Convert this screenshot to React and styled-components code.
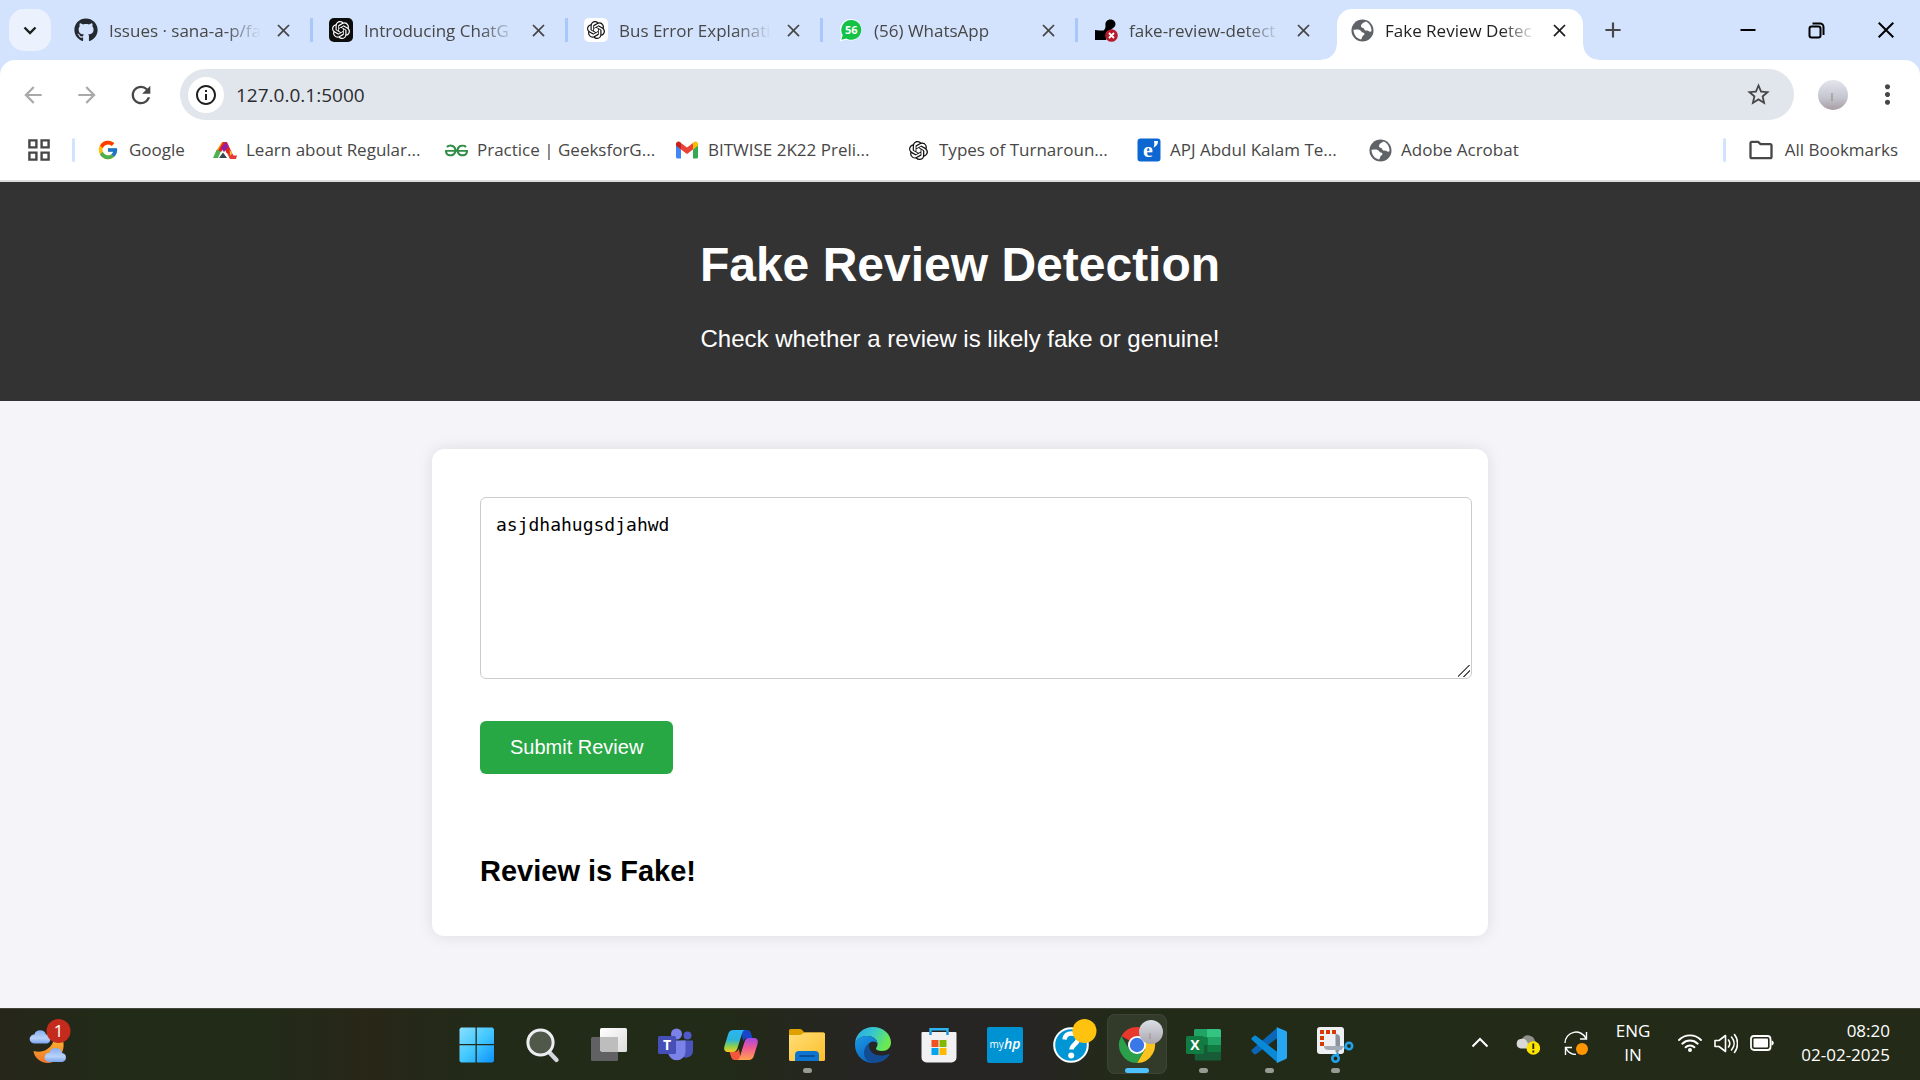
import React, { useState } from "react";
import styled, { createGlobalStyle, css } from "styled-components";
import { FaGithub } from "react-icons/fa";
import { FcGoogle } from "react-icons/fc";
import { SiOpenai, SiGeeksforgeeks } from "react-icons/si";
import { MdArrowBack, MdArrowForward, MdRefresh, MdOutlineInfo, MdStarBorder, MdMoreVert, MdClose, MdAdd, MdOutlineFolder } from "react-icons/md";

const uiFont = '"Open Sans", "Noto Sans", sans-serif';
const pageFont = '"Liberation Sans", Arial, sans-serif';

const GlobalStyle = createGlobalStyle`
  *, *::before, *::after { box-sizing: border-box; }
  body { margin: 0; font-family: ${uiFont}; }
  button { margin: 0; padding: 0; border: 0; background: none; font: inherit; color: inherit; cursor: pointer; }
  a { color: inherit; text-decoration: none; }
  svg { display: block; flex: none; }
`;

const Desktop = styled.div`
  display: flex;
  flex-direction: column;
  min-height: 100vh;
  background: #f4f4f9;
`;

/* ---------- browser chrome ---------- */

const BrowserTop = styled.header`
  background: #d3e3fd;
  color: #474747;
  font-size: 17px;
  line-height: 24px;
`;

const TabStrip = styled.div`
  display: flex;
  align-items: center;
  height: 60px;
  padding-left: 9px;
`;

const TabSearch = styled.button`
  display: flex;
  align-items: center;
  justify-content: center;
  width: 42px;
  height: 42px;
  margin-right: 7px;
  border-radius: 15px;
  background: #ebf2fe;
  color: #1f1f1f;
`;

const Tab = styled.div`
  display: flex;
  align-items: center;
  flex: 0 1 255px;
  min-width: 0;
  height: 24px;
  padding-left: 16px;
  border-right: 3px solid ${(p) => (p.$last ? "transparent" : "#a8c7fa")};
  ${(p) =>
    p.$active &&
    css`
      position: relative;
      align-self: flex-end;
      flex-basis: 246px;
      height: 51px;
      margin: 0 4px;
      padding: 0 0 9px 13px;
      border: 0;
      border-radius: 15px 15px 0 0;
      background: #fff;
      color: #1f1f1f;
      &::before,
      &::after {
        content: "";
        position: absolute;
        bottom: 0;
        width: 15px;
        height: 15px;
      }
      &::before {
        right: 100%;
        background: radial-gradient(circle at 0 0, transparent 14px, #fff 15px);
      }
      &::after {
        left: 100%;
        background: radial-gradient(circle at 100% 0, transparent 14px, #fff 15px);
      }
    `}
`;

const IconSlot = styled.span`
  display: flex;
  align-items: center;
  justify-content: center;
  flex: none;
  width: 24px;
  height: 24px;
`;

const TabLabel = styled.a`
  flex: 0 0 152px;
  margin: 0 10px 0 11px;
  padding-top: 2px;
  white-space: nowrap;
  mask-image: linear-gradient(to right, #000 calc(100% - 36px), transparent);
`;

const SmallButton = styled.button`
  display: flex;
  align-items: center;
  justify-content: center;
  flex: none;
  width: 24px;
  height: 24px;
`;

const NewTab = styled(SmallButton)`
  width: 36px;
  height: 36px;
  margin-left: 8px;
`;

const WindowControls = styled.div`
  display: flex;
  margin-left: auto;
`;

const WindowButton = styled.button`
  display: flex;
  align-items: center;
  justify-content: center;
  width: 69px;
  height: 58px;
`;

const Toolbar = styled.div`
  display: flex;
  align-items: center;
  gap: 12px;
  padding: 9px 12px 0;
  border-radius: 15px 15px 0 0;
  background: #fff;
`;

const NavButton = styled.button`
  display: flex;
  align-items: center;
  justify-content: center;
  flex: none;
  width: 42px;
  height: 42px;
  color: ${(p) => (p.disabled ? "#a9a9a9" : "#474747")};
`;

const Omnibox = styled.div`
  display: flex;
  align-items: center;
  flex: 1;
  height: 51px;
  margin: 0 12px 0 6px;
  padding: 0 15px 0 8px;
  border-radius: 26px;
  background: #e1e5ec;
`;

const SiteInfo = styled.button`
  display: flex;
  align-items: center;
  justify-content: center;
  width: 36px;
  height: 36px;
  border-radius: 50%;
  background: #fff;
  color: #1f1f1f;
`;

const Address = styled.input`
  flex: 1;
  min-width: 0;
  padding: 0 12px;
  border: 0;
  outline: 0;
  background: none;
  color: #2b2c2e;
  font: 19px/28px ${uiFont};
`;

const Profile = styled.button`
  display: flex;
  align-items: center;
  justify-content: center;
  width: 30px;
  height: 30px;
  margin-right: 6px;
  border-radius: 50%;
  background: linear-gradient(#e4e6ee, #c3c5cf 60%, #a99ca4);
`;

const BookmarkBar = styled.nav`
  display: flex;
  align-items: center;
  height: 62px;
  padding: 0 22px 0 27px;
  border-bottom: 2px solid #dedede;
  background: #fff;
`;

const Divider = styled.span`
  width: 3px;
  height: 24px;
  margin: 0 21px;
  border-radius: 2px;
  background: #d3e3fd;
`;

const Bookmark = styled.a`
  display: flex;
  align-items: center;
  gap: 9px;
  margin-right: 24px;
  white-space: nowrap;
`;

const BookmarkLabel = styled.span`
  width: ${(p) => (p.$long ? "174px" : "auto")};
  min-width: 60px;
`;

const AllBookmarks = styled.button`
  display: flex;
  align-items: center;
  gap: 10px;
`;

const PushRight = styled.div`
  display: flex;
  align-items: center;
  margin-left: auto;
`;

/* ---------- web page ---------- */

const Page = styled.main`
  flex: 1;
  background: #f4f4f9;
  font-family: ${pageFont};
`;

const Hero = styled.div`
  display: flex;
  flex-direction: column;
  padding: 24px;
  background: #333;
  color: #fff;
  text-align: center;
`;

const Title = styled.h1`
  margin: 32px 0;
  font-size: 48px;
  line-height: 54px;
`;

const Tagline = styled.p`
  margin: 0 0 24px;
  font-size: 24px;
  line-height: 29px;
`;

const Card = styled.section`
  width: 55%;
  margin: 48px auto;
  padding: 48px;
  border-radius: 12px;
  background: #fff;
  box-shadow: 0 0 15px rgba(0, 0, 0, 0.1);
`;

const ReviewForm = styled.form`
  display: flex;
  flex-direction: column;
  align-items: flex-start;
  gap: 42px;
`;

const ReviewBox = styled.textarea`
  box-sizing: content-box;
  width: 100%;
  height: 150px;
  padding: 15px;
  border: 1px solid #ccc;
  border-radius: 6px;
  outline: 0;
  background: #fff;
  color: #000;
  font: 18px/24px "DejaVu Sans Mono", monospace;
  &::-webkit-resizer {
    background: linear-gradient(135deg, transparent 45%, #555 46% 52%, transparent 53% 68%, #555 69% 75%, transparent 76%) 2px 2px / 12px 12px no-repeat;
  }
`;

const Submit = styled.button`
  padding: 15px 30px;
  border-radius: 6px;
  background: #28a745;
  color: #fff;
  font: 20px/23px ${pageFont};
`;

const Result = styled.h2`
  margin: 80px 0 0;
  color: #000;
  font-size: 29px;
  line-height: 34px;
`;

/* ---------- taskbar ---------- */

const Taskbar = styled.footer`
  display: grid;
  grid-template-columns: 447px auto 1fr;
  align-items: center;
  height: 72px;
  padding-bottom: 1px;
  border-top: 1px solid #43453d;
  background: linear-gradient(to right, #26261a, #222a18 5%, #222a18 14%, #282718 19%, #222a18 25%, #222a18 38%, #272523 45%, #272523 54%, #222a18 58%, #232b18);
  color: #fff;
  font-size: 17px;
  line-height: 24px;
`;

const Widgets = styled.button`
  justify-self: start;
  margin-left: 28px;
  padding-bottom: 2px;
`;

const AppRow = styled.div`
  display: flex;
  gap: 6px;
`;

const AppButton = styled.button`
  display: flex;
  flex-direction: column;
  align-items: center;
  justify-content: flex-end;
  gap: 5px;
  width: 60px;
  height: 60px;
  padding-bottom: 1px;
  border-radius: 8px;
  ${(p) => p.$active && "background: #323a2a; box-shadow: inset 0 0 0 1px #3d4435;"}
`;

const Indicator = styled.span`
  width: ${(p) => (p.$state === "active" ? 24 : 9)}px;
  height: 5px;
  border-radius: 3px;
  background: ${(p) => (p.$state === "active" ? "#4cc2ff" : p.$state === "open" ? "#989b94" : "transparent")};
`;

const Tray = styled.div`
  display: flex;
  align-items: center;
  justify-content: flex-end;
  gap: 24px;
  padding: 0 30px 2px 0;
`;

const Status = styled.button`
  display: flex;
  gap: 12px;
`;

const Language = styled.button`
  width: 42px;
  text-align: center;
`;

const Clock = styled.button`
  min-width: 92px;
  text-align: right;
`;

/* ---------- drawings ---------- */

const Globe = () => (
  <svg width="23" height="23" viewBox="0 0 24 24" fill="none">
    <circle cx="12" cy="12" r="11.5" fill="#5f6368" />
    <path d="M15.5 2.6C12.5 4 10.2 5.4 10.4 7.6c.2 1.9 2.6 1.3 3.2 2.7.5 1.3 1 2 2.8 1.8 1.6-.2 2 1.2 3.6 1.2l1.4-.6c.2-4.600-2.200-8.300-5.900-10.100z" fill="#fff" />
    <path d="M2.600 11.200c2.600.2 4.200-.6 6.400.2 2.200.9 1.500 2.300 3.500 2.700 2.100.4 1.900 2.300.4 3.200-1.700 1-1 2.400-2.300 4.100-4.600-.9-7.900-4.900-8-10.200z" fill="#fff" />
  </svg>
);

const OpenAiTile = ({ dark }) => (
  <svg width="24" height="24" viewBox="0 0 24 24">
    <rect width="24" height="24" rx="5" fill={dark ? "#0d0d0d" : "#fff"} />
    <SiOpenai x="3" y="3" size={18} color={dark ? "#fff" : "#111"} />
  </svg>
);

const WhatsApp = () => (
  <svg width="24" height="24" viewBox="0 0 24 24">
    <path d="M12.300 1A10.800 10.800 0 1 1 7.200 21.600L.8 23.400 2.500 17A10.800 10.800 0 0 1 12.300 1z" fill="#fff" />
    <path d="M12.300 2A9.900 9.900 0 1 1 7.300 20.400L2.400 21.800 3.700 17A9.900 9.900 0 0 1 12.300 2z" fill="#14c246" />
    <text x="12.300" y="16" textAnchor="middle" fontSize="11" fontWeight="700" fontFamily="Open Sans, sans-serif" fill="#fff">56</text>
  </svg>
);

const Notebook = () => (
  <svg width="24" height="24" viewBox="0 0 24 24">
    <path d="M1 12c2.500.7 4.600.3 8.500.5 1.600-1.400 2-2.500 2-5C11 4 13 1.500 16.600 1.500c3.200 0 5.400 2.500 4.800 5.500-.6 2.600-3.600 3.600-5.600 5.800-1.400 2-1.800 5-3.800 9.200H1z" fill="#000" />
    <circle cx="17.500" cy="17.500" r="6.300" fill="#b81c2c" />
    <path d="M15 15l5 5M20 15l-5 5" stroke="#fff" strokeWidth="1.800" />
  </svg>
);

const Mountain = () => (
  <svg width="24" height="22" viewBox="0 0 24 22">
    <path d="M9 3h4l-7 9H3z" fill="#f7a11a" />
    <path d="M3.500 11h5L5 19H0z" fill="#4cb050" />
    <path d="M10 3h4l5 11h-5.500L11 8.500 8 13 5.500 11z" fill="#e0251b" />
    <path d="M13 3l2.500 4.500L11 13 8 9z" fill="#8f1fa8" />
    <path d="M6 19l4-5.500L14 19z" fill="#37474f" />
    <path d="M14 14h5l1.500 2.500H24l-1 3.500h-6z" fill="#e53935" />
    <path d="M16.500 11l2.500 3-1.500 3z" fill="#fdd835" />
  </svg>
);

const Gmail = () => (
  <svg width="22" height="18" viewBox="0 0 22 17">
    <path d="M0 2.500V15.500A1.500 1.500 0 0 0 1.500 17H5V8z" fill="#4285f4" />
    <path d="M22 2.500V15.500A1.500 1.500 0 0 1 20.500 17H17V8z" fill="#34a853" />
    <path d="M17 1.500V8l5-3.700V2.500C22 .3 19.500-.8 17.800.6z" fill="#fbbc04" />
    <path d="M5 8V1.500l6 4.600 6-4.600V8l-6 4.600z" fill="#ea4335" />
    <path d="M0 2.500v1.800L5 8V1.500L4.200.6C2.500-.8 0 .3 0 2.500z" fill="#c5221f" />
  </svg>
);

const ETile = () => (
  <svg width="24" height="24" viewBox="0 0 24 24">
    <rect x=".5" y=".5" width="23" height="23" rx="3" fill="#0d67d2" />
    <text x="11" y="19" textAnchor="middle" fontSize="22" fontWeight="700" fontFamily="Liberation Serif, serif" fill="#fff">e</text>
    <path d="M17 3h4c0 3-1 5-4.500 6.500 1-2 1-4 .5-6.500z" fill="#fff" />
  </svg>
);

const AppsGrid = () => (
  <svg width="24" height="24" viewBox="0 0 24 24" fill="none" stroke="#474747" strokeWidth="2.400">
    <path d="M2.400 2.400h7v7h-7zM14.600 2.400h7v7h-7zM2.400 14.600h7v7h-7zM14.600 14.600h7v7h-7z" />
  </svg>
);

const ChevronDown = () => (
  <svg width="14" height="14" viewBox="0 0 14 14" fill="none" stroke="#1f1f1f" strokeWidth="2.400"><path d="M1.500 4.500L7 10l5.500-5.500" /></svg>
);
const MinimizeIcon = () => (
  <svg width="16" height="16" viewBox="0 0 16 16" stroke="#000" strokeWidth="2"><path d="M.5 8h15" /></svg>
);
const RestoreIcon = () => (
  <svg width="17" height="17" viewBox="0 0 17 17" fill="none" stroke="#000" strokeWidth="2">
    <rect x="1.500" y="4.500" width="11" height="11" rx="2" />
    <path d="M4.500 1.500H12a3.500 3.500 0 0 1 3.500 3.500v8" />
  </svg>
);
const CloseIcon = () => (
  <svg width="16" height="16" viewBox="0 0 16 16" stroke="#000" strokeWidth="2"><path d="M.7.7l14.600 14.600M15.300.7L.7 15.300" /></svg>
);

const Weather = () => (
  <svg width="44" height="54" viewBox="0 0 44 54">
    <defs>
      <linearGradient id="moon" x1="0" y1="0" x2="0" y2="1"><stop stopColor="#fbb731" /><stop offset="1" stopColor="#f0752a" /></linearGradient>
      <linearGradient id="cloud" x1="0" y1="0" x2="0" y2="1"><stop stopColor="#86aef0" /><stop offset=".6" stopColor="#b7d3fb" /><stop offset="1" stopColor="#7ca4ea" /></linearGradient>
    </defs>
    <path d="M5.500 35c8 2.500 17-1 20.500-11l8-2c5 10-2 25-14 25-8 0-14-6-14.500-12z" fill="url(#moon)" />
    <path d="M6 27.500a4.500 4.500 0 0 1 .3-9 6.200 6.200 0 0 1 11.700 0 4.600 4.600 0 0 1 1 9z" fill="url(#cloud)" />
    <path d="M21 46a4.600 4.600 0 0 1 .4-9.200 6.500 6.500 0 0 1 12.600.2 4.600 4.600 0 0 1 .5 9z" fill="url(#cloud)" />
    <circle cx="30.500" cy="15" r="12" fill="#c42b1c" />
    <text x="30.500" y="21" textAnchor="middle" fontSize="17" fontFamily="Open Sans, sans-serif" fill="#fff">1</text>
  </svg>
);

const Art = ({ children }) => (
  <svg width="36" height="36" viewBox="0 0 36 36" overflow="visible">{children}</svg>
);

const StartArt = () => (
  <Art>
    <defs><linearGradient id="win" gradientUnits="userSpaceOnUse" x1="0" y1="0" x2="36" y2="36"><stop stopColor="#8be0ff" /><stop offset=".5" stopColor="#43c8ff" /><stop offset="1" stopColor="#0a90fb" /></linearGradient></defs>
    <path d="M2 .5h14.500V17H.5V2zM17.800.5H33.500l1.500 1.500v15H17.800zM.5 18.300h16V35.500H2L.5 34zM17.800 18.300H35V34l-1.500 1.500H17.800z" fill="url(#win)" />
  </Art>
);
const SearchArt = () => (
  <Art>
    <path d="M24.500 25.500l7 7.500" stroke="#d5d7dd" strokeWidth="4.400" strokeLinecap="round" />
    <circle cx="15.500" cy="15.500" r="12.600" fill="#50584a" stroke="#eceef2" strokeWidth="3" />
  </Art>
);
const TaskViewArt = () => (
  <Art>
    <defs><linearGradient id="tv" x1="0" y1="0" x2="1" y2="1"><stop stopColor="#fff" /><stop offset="1" stopColor="#dcdcdc" /></linearGradient></defs>
    <rect x="9" y="1" width="27" height="24" rx="1.500" fill="url(#tv)" />
    <rect x="0" y="10" width="27" height="24" rx="1.500" fill="#616163" />
    <path d="M9 10h18v15H10.500L9 23.500z" fill="#bdbdbd" />
  </Art>
);
const TeamsArt = () => (
  <Art>
    <circle cx="30.500" cy="8.500" r="4" fill="#5059c9" />
    <path d="M24 13.500h12v10a7 7 0 0 1-12 5z" fill="#4b53bc" />
    <circle cx="19.500" cy="7" r="5.500" fill="#7b83eb" />
    <path d="M11 13.500h17.500v11a8.700 8.700 0 0 1-17.500 0z" fill="#7b83eb" />
    <rect x="1" y="9" width="18" height="18" rx="1.500" fill="#464eb8" />
    <text x="10" y="23" textAnchor="middle" fontSize="14" fontWeight="700" fontFamily="Open Sans, sans-serif" fill="#fff">T</text>
  </Art>
);
const CopilotArt = () => (
  <Art>
    <defs>
      <linearGradient id="cp1" x1="0" y1="0" x2="0" y2="1"><stop stopColor="#2cb5f5" /><stop offset=".45" stopColor="#2cb5d8" /><stop offset=".75" stopColor="#8fd04a" /><stop offset="1" stopColor="#f9cb23" /></linearGradient>
      <linearGradient id="cp2" x1="0" y1="0" x2="0" y2="1"><stop stopColor="#a348e8" /><stop offset=".45" stopColor="#ee5a94" /><stop offset="1" stopColor="#ffa24c" /></linearGradient>
    </defs>
    <path d="M18 3h6c2.600 0 3.500 1.500 4.200 4l1.300 4h-5c-2.500 0-3.600 1.300-4.300 3.500z" fill="#1746c8" />
    <path d="M18 33h-6c-2.600 0-3.500-1.500-4.200-4L6.500 25h5c2.500 0 3.600-1.300 4.300-3.500z" fill="#f4573b" />
    <path d="M10.500 3h12c-2.400 0-3 2-3.700 4.300L14.500 21c-.9 2.700-2 4-4.500 4H5.200c-3.700 0-4.700-2.500-3.700-6L5.200 7C6 4.400 7.700 3 10.500 3z" fill="url(#cp1)" />
    <path d="M25.500 33h-12c2.400 0 3-2 3.700-4.300L21.500 15c.9-2.700 2-4 4.500-4h4.800c3.700 0 4.700 2.500 3.700 6l-3.700 12c-.8 2.600-2.500 4-5.300 4z" fill="url(#cp2)" />
  </Art>
);
const FilesArt = () => (
  <Art>
    <defs><linearGradient id="fl" x1="0" y1="0" x2="1" y2="1"><stop stopColor="#ffde7a" /><stop offset="1" stopColor="#fdbf28" /></linearGradient></defs>
    <path d="M0 3.500A1.500 1.500 0 0 1 1.500 2H11c1.500 0 2 .8 3 2l1.500 1.500H34A2 2 0 0 1 36 7v8H0z" fill="#dfa100" />
    <path d="M0 8h11c2 0 3-2.500 5-2.500h18.500A1.500 1.500 0 0 1 36 7v25.500a1.500 1.500 0 0 1-1.500 1.500h-33A1.500 1.500 0 0 1 0 32.500z" fill="url(#fl)" />
    <path d="M6 34v-6a4 4 0 0 1 4-4h16a4 4 0 0 1 4 4v6z" fill="#0f74cf" />
    <path d="M11 29h14" stroke="#0a4f9a" strokeWidth="2" strokeLinecap="round" />
  </Art>
);
const EdgeArt = () => (
  <Art>
    <defs>
      <linearGradient id="eg1" x1="0" y1="0" x2="1" y2=".4"><stop stopColor="#2aa6e6" /><stop offset=".5" stopColor="#35c6d0" /><stop offset="1" stopColor="#6bea50" /></linearGradient>
      <linearGradient id="eg2" x1="0" y1="0" x2=".6" y2="1"><stop stopColor="#1c9be8" /><stop offset="1" stopColor="#0a62bb" /></linearGradient>
    </defs>
    <path d="M0 16C1 6.500 8.500 0 18 0c10.500 0 18 7.500 18 15.500 0 5-3.800 8.500-9 8.500-4 0-6-1.200-6-2.500 0-1 1.500-1.700 1.500-4.500 0-4.500-4.500-8-10.500-8C7 9 2.500 11.500 0 16z" fill="url(#eg1)" />
    <path d="M12 9c6 0 10.500 3.500 10.500 8-1-2-2.500-2.600-4.500-2.600-3 0-5.500 3.100-5.500 7.100 0 6 5 10.500 12 10.500-.8 2.500-3.500 4-6.500 4C8 36 0 28 0 18v-2c2.500-4.500 7-7 12-7z" fill="url(#eg2)" />
    <path d="M14.500 16c-2 6 2.500 12.500 11.500 12.500 3.200 0 5.500-.7 7.500-1.500.8-.3 1.400.3.900 1C31.200 33 25 36 19 36c-6 0-10-5-10-10 0-4.500 2.500-8 5.500-10z" fill="#134c92" />
  </Art>
);
const StoreArt = () => (
  <Art>
    <path d="M9.500 8V2.300h17V8" fill="none" stroke="#2bb4f2" strokeWidth="2.400" />
    <path d="M.5 6A1 1 0 0 1 1.500 5h33a1 1 0 0 1 1 1v24.500a5 5 0 0 1-5 5h-25a5 5 0 0 1-5-5z" fill="#f1f1f3" />
    <path d="M9.500 5v3M26.500 5v3" stroke="#1590dc" strokeWidth="2.400" />
    <path d="M10.500 13h7v7h-7z" fill="#f25022" /><path d="M18.500 13h7v7h-7z" fill="#7fba00" />
    <path d="M10.500 21h7v7h-7z" fill="#00a4ef" /><path d="M18.500 21h7v7h-7z" fill="#ffb900" />
  </Art>
);
const MyHpArt = () => (
  <Art>
    <rect width="36" height="36" rx="2" fill="#0093d3" />
    <text x="2.500" y="21" fontSize="10" fontFamily="Open Sans, sans-serif" fill="#fff">my</text>
    <text x="17" y="22" fontSize="14" fontStyle="italic" fontWeight="600" fontFamily="Open Sans, sans-serif" fill="#fff">hp</text>
  </Art>
);
const HelpArt = () => (
  <Art>
    <circle cx="18" cy="18" r="16.800" fill="#0096d6" stroke="#fff" strokeWidth="2" />
    <path d="M11.500 12.500c.5-4 3-6 6.800-6 4 0 6.700 2.300 6.700 5.600 0 5-6.500 5.400-6.500 10.400" fill="none" stroke="#fff" strokeWidth="4.400" />
    <circle cx="18.200" cy="28.500" r="3" fill="#fff" />
    <circle cx="31.500" cy="4" r="12" fill="#ffc20e" />
  </Art>
);
const ChromeArt = () => (
  <Art>
    <defs><linearGradient id="pf" x1="0" y1="0" x2="0" y2="1"><stop stopColor="#dcdfe8" /><stop offset="1" stopColor="#aaa6ae" /></linearGradient></defs>
    <path d="M18 18L2.400 9A18 18 0 0 1 33.600 9H18z" fill="#e8392d" />
    <path d="M18 9H33.600A18 18 0 0 1 18 36l7.800-13.500z" fill="#fcc31e" />
    <path d="M25.800 22.500L18 36A18 18 0 0 1 2.400 9l7.800 13.500z" fill="#2aa04a" />
    <circle cx="18" cy="18" r="9" fill="#fff" />
    <circle cx="18" cy="18" r="7.200" fill="#3b78e7" />
    <circle cx="32" cy="5" r="12" fill="url(#pf)" />
    <path d="M31 6v6" stroke="#9c9387" />
  </Art>
);
const ExcelArt = () => (
  <Art>
    <path d="M10 2h12v9H9V3z" fill="#21a366" /><path d="M22 2h12.500L36 3v8H22z" fill="#33c481" />
    <path d="M9 10h13.500v8H9z" fill="#107c41" /><path d="M22.500 10H36v8H22.500z" fill="#21a366" />
    <path d="M9 18h27v15.500H10z" fill="#185c37" /><path d="M22.500 18H36v7H22.500z" fill="#107c41" />
    <rect x="1" y="9" width="18" height="18" rx="1.500" fill="#107c41" />
    <text x="10" y="23" textAnchor="middle" fontSize="14" fontWeight="700" fontFamily="Open Sans, sans-serif" fill="#fff">X</text>
  </Art>
);
const CodeArt = () => (
  <Art>
    <path d="M26.500.5L1 22.500c-.8.800-.8 1.800 0 2.600l2 1.900c.7.600 1.500.600 2.300 0L27 10.500z" fill="#0b66b5" />
    <path d="M1 10.500c-.8.800-.8 1.800 0 2.600l25.500 22.400L27 25.500 5.300 9c-.8-.6-1.600-.6-2.300 0z" fill="#0a8ad6" />
    <path d="M26.500.500L35 4a2 2 0 0 1 1 1.800v24.400a2 2 0 0 1-1 1.800l-8.500 3.700c-1 .3-1.500 0-.500-1.500V2c-1-1.500-.500-1.800.500-1.500z" fill="#27a7f2" />
  </Art>
);
const SnipArt = () => (
  <Art>
    <rect width="27" height="27" rx="3" fill="#eef0f3" />
    <path d="M3 3h4v4H3zM9 3h4v4H9zM15 3h4v4h-4zM3 9h4v4H3zM3 15h4v4H3z" fill="#d83b01" />
    <path d="M18.500 7c2.500 0 4.500 1 4.500 4v11l-2.500 5-2-2.500z" fill="#8a939e" />
    <path d="M7 19h20l-2.500 4H12c-3 0-5-1-5-4z" fill="#a3abb5" />
    <circle cx="32" cy="19" r="3.200" fill="none" stroke="#22a2ea" strokeWidth="2.600" />
    <circle cx="18.500" cy="31.500" r="3.200" fill="none" stroke="#22a2ea" strokeWidth="2.600" />
    <path d="M27 21l3-1M20 29l1-3" stroke="#22a2ea" strokeWidth="2.600" />
  </Art>
);

const ProfileMark = () => (
  <svg width="4" height="14" viewBox="0 0 4 14" stroke="#8f877c"><path d="M1 5v8" /></svg>
);
const ChevronUp = () => (
  <svg width="24" height="24" viewBox="0 0 24 24" fill="none" stroke="#fff" strokeWidth="2"><path d="M4.500 15.500L12 8l7.500 7.500" /></svg>
);
const CloudAlert = () => (
  <svg width="24" height="24" viewBox="0 0 24 24">
    <path d="M6 8a7 7 0 0 1 13 2c2 .500 2 6 0 6H10z" fill="#8f9189" />
    <path d="M4.500 17.500a4.800 4.800 0 0 1 0-9.400c3-1 6 .4 7 3.400l2 6z" fill="#d9d9d9" />
    <circle cx="17.300" cy="17" r="6.800" fill="#fde300" />
    <path d="M17.300 12.500v5.500M17.300 19.500v2" stroke="#222" strokeWidth="1.800" />
  </svg>
);
const SyncIcon = () => (
  <svg width="24" height="24" viewBox="0 0 24 24" fill="none" stroke="#fff" strokeWidth="1.400">
    <path d="M1 12A11 11 0 0 1 22 7.500M22.500 1v7H16M12 23.500C8 23.500 4 21 2 17.300M1.500 24v-7.500H8" />
    <circle cx="18" cy="18" r="6" fill="#ff9500" stroke="none" />
  </svg>
);
const WifiIcon = () => (
  <svg width="24" height="24" viewBox="0 0 24 24" fill="none" stroke="#fff" strokeWidth="1.900" strokeLinecap="round">
    <path d="M1 9a15.500 15.500 0 0 1 22 0M4.300 12.700a11 11 0 0 1 15.400 0M7.600 16.300a6.300 6.300 0 0 1 8.800 0" />
    <circle cx="12" cy="19" r="2" fill="#fff" stroke="none" />
  </svg>
);
const VolumeIcon = () => (
  <svg width="24" height="24" viewBox="0 0 24 24" fill="none" stroke="#fff" strokeWidth="1.600" strokeLinecap="round" strokeLinejoin="round">
    <path d="M1 9.500v6h4l6.500 5v-16l-6.500 5zM14.500 9c1.500 2 1.500 5 0 7M17.500 6c3.500 4 3.500 9 0 13M20.500 3.500c4 5 4 13 0 18" />
  </svg>
);
const BatteryIcon = () => (
  <svg width="24" height="24" viewBox="0 0 24 24" fill="none">
    <rect x="1" y="5" width="19.500" height="14" rx="3" stroke="#fff" strokeWidth="1.800" />
    <rect x="3.500" y="7.500" width="14.500" height="9" rx="1" fill="#fff" />
    <path d="M21.500 9.500c3 .5 3 4.500 0 5z" fill="#fff" />
  </svg>
);

/* ---------- data ---------- */

const tabs = [
  { title: "Issues · sana-a-p/fa", icon: <FaGithub size={24} color="#24292f" /> },
  { title: "Introducing ChatG", icon: <OpenAiTile dark /> },
  { title: "Bus Error Explanati", icon: <OpenAiTile /> },
  { title: "(56) WhatsApp", icon: <WhatsApp /> },
  { title: "fake-review-detect", icon: <Notebook />, last: true },
  { title: "Fake Review Detec", icon: <Globe />, active: true },
];

const bookmarks = [
  { label: "Google", icon: <FcGoogle size={22} /> },
  { label: "Learn about Regular...", icon: <Mountain />, long: true },
  { label: "Practice | GeeksforG...", icon: <SiGeeksforgeeks size={23} color="#2f8d46" />, long: true },
  { label: "BITWISE 2K22 Preli...", icon: <Gmail />, long: true },
  { label: "Types of Turnaroun...", icon: <SiOpenai size={19} color="#111" />, long: true },
  { label: "APJ Abdul Kalam Te...", icon: <ETile />, long: true },
  { label: "Adobe Acrobat", icon: <Globe /> },
];

const apps = [
  { name: "Start", art: <StartArt /> },
  { name: "Search", art: <SearchArt /> },
  { name: "Task View", art: <TaskViewArt /> },
  { name: "Microsoft Teams", art: <TeamsArt /> },
  { name: "Copilot", art: <CopilotArt /> },
  { name: "File Explorer", art: <FilesArt />, state: "open" },
  { name: "Microsoft Edge", art: <EdgeArt /> },
  { name: "Microsoft Store", art: <StoreArt /> },
  { name: "myHP", art: <MyHpArt /> },
  { name: "HP Support Assistant", art: <HelpArt /> },
  { name: "Google Chrome", art: <ChromeArt />, state: "active" },
  { name: "Excel", art: <ExcelArt />, state: "open" },
  { name: "Visual Studio Code", art: <CodeArt />, state: "open" },
  { name: "Snipping Tool", art: <SnipArt />, state: "open" },
];

export default function App() {
  const [url, setUrl] = useState("127.0.0.1:5000");
  const [review, setReview] = useState("asjdhahugsdjahwd");

  return (
    <Desktop>
      <GlobalStyle />
      <BrowserTop>
        <TabStrip>
          <TabSearch aria-label="Search tabs"><ChevronDown /></TabSearch>
          {tabs.map((tab) => (
            <Tab key={tab.title} $active={tab.active} $last={tab.last}>
              <IconSlot>{tab.icon}</IconSlot>
              <TabLabel href="#">{tab.title}</TabLabel>
              <SmallButton aria-label="Close tab"><MdClose size={21} /></SmallButton>
            </Tab>
          ))}
          <NewTab aria-label="New tab"><MdAdd size={26} /></NewTab>
          <WindowControls>
            <WindowButton aria-label="Minimize"><MinimizeIcon /></WindowButton>
            <WindowButton aria-label="Restore"><RestoreIcon /></WindowButton>
            <WindowButton aria-label="Close"><CloseIcon /></WindowButton>
          </WindowControls>
        </TabStrip>

        <Toolbar>
          <NavButton aria-label="Back" disabled><MdArrowBack size={26} /></NavButton>
          <NavButton aria-label="Forward" disabled><MdArrowForward size={26} /></NavButton>
          <NavButton aria-label="Reload"><MdRefresh size={28} /></NavButton>
          <Omnibox>
            <SiteInfo aria-label="Site information"><MdOutlineInfo size={24} /></SiteInfo>
            <Address aria-label="Address" value={url} onChange={(e) => setUrl(e.target.value)} />
            <NavButton aria-label="Bookmark this page"><MdStarBorder size={27} /></NavButton>
          </Omnibox>
          <Profile aria-label="Profile"><ProfileMark /></Profile>
          <NavButton aria-label="Menu"><MdMoreVert size={31} /></NavButton>
        </Toolbar>

        <BookmarkBar>
          <SmallButton aria-label="Apps"><AppsGrid /></SmallButton>
          <Divider />
          {bookmarks.map((b) => (
            <Bookmark key={b.label} href="#">
              <IconSlot>{b.icon}</IconSlot>
              <BookmarkLabel $long={b.long}>{b.label}</BookmarkLabel>
            </Bookmark>
          ))}
          <PushRight>
            <Divider />
            <AllBookmarks><MdOutlineFolder size={28} />All Bookmarks</AllBookmarks>
          </PushRight>
        </BookmarkBar>
      </BrowserTop>

      <Page>
        <Hero>
          <Title>Fake Review Detection</Title>
          <Tagline>Check whether a review is likely fake or genuine!</Tagline>
        </Hero>
        <Card>
          <ReviewForm onSubmit={(e) => e.preventDefault()}>
            <ReviewBox aria-label="Review" spellCheck={false} value={review} onChange={(e) => setReview(e.target.value)} />
            <Submit type="submit">Submit Review</Submit>
          </ReviewForm>
          <Result>Review is Fake!</Result>
        </Card>
      </Page>

      <Taskbar>
        <Widgets aria-label="Widgets"><Weather /></Widgets>
        <AppRow>
          {apps.map((app) => (
            <AppButton key={app.name} aria-label={app.name} $active={app.state === "active"}>
              {app.art}
              <Indicator $state={app.state} />
            </AppButton>
          ))}
        </AppRow>
        <Tray>
          <SmallButton aria-label="Show hidden icons"><ChevronUp /></SmallButton>
          <SmallButton aria-label="OneDrive"><CloudAlert /></SmallButton>
          <SmallButton aria-label="Windows Update"><SyncIcon /></SmallButton>
          <Language>ENG<br />IN</Language>
          <Status aria-label="Network, volume and battery"><WifiIcon /><VolumeIcon /><BatteryIcon /></Status>
          <Clock>08:20<br />02-02-2025</Clock>
        </Tray>
      </Taskbar>
    </Desktop>
  );
}
